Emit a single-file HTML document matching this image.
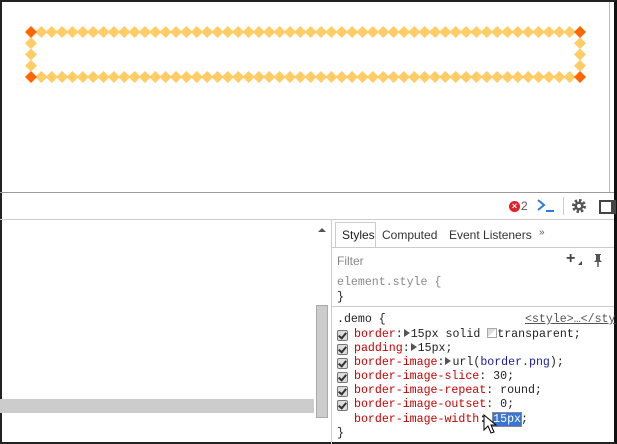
<!DOCTYPE html>
<html><head><style>
body{margin:0;width:617px;height:444px;overflow:hidden;background:#fff;position:relative;font-family:"Liberation Sans",sans-serif}
.a{position:absolute}
.m{font-family:"Liberation Mono",monospace;font-size:11.6px;color:#222;white-space:pre;line-height:14px}
.r{color:#c80000}.b{color:#1a1aa6}
.cb{position:absolute;left:337px;width:9px;height:9px;border:1px solid #777;border-radius:2px;background:#ddd}
.cb:after{content:"";position:absolute;left:2px;top:0px;width:3px;height:6px;border:solid #333;border-width:0 2px 2px 0;transform:rotate(40deg)}
.tri{display:inline-block;width:0;height:0;border-left:6px solid #555;border-top:4px solid transparent;border-bottom:4px solid transparent;margin:0 1px;vertical-align:0}
</style></head><body>
<div class="a" style="left:0;top:0;width:617px;height:444px;box-sizing:border-box;border:2px solid #222;border-right:3px solid #111"></div>
<div class="a" style="left:609px;top:2px;width:1px;height:190px;background:#bbb"></div>
<svg class="a" style="left:0;top:0" width="617" height="192">
<defs>
<pattern id="h" patternUnits="userSpaceOnUse" x="36.18" y="26" width="10.358" height="12"><path d="M5.18 0L11.18 6L5.18 12L-0.82 6Z" fill="#ffcc66"/></pattern>
<pattern id="v" patternUnits="userSpaceOnUse" x="25" y="37.25" width="12" height="11.25"><path d="M6 0L12 6L6 12L0 6Z" fill="#ffcc66"/></pattern>
<pattern id="v2" patternUnits="userSpaceOnUse" x="574" y="37.25" width="12" height="11.25"><path d="M6 0L12 6L6 12L0 6Z" fill="#ffcc66"/></pattern>
<pattern id="h2" patternUnits="userSpaceOnUse" x="36.18" y="71" width="10.358" height="12"><path d="M5.18 0L11.18 6L5.18 12L-0.82 6Z" fill="#ffcc66"/></pattern>
</defs>
<rect x="36" y="26" width="539" height="12" fill="url(#h)"/>
<rect x="36" y="71" width="539" height="12" fill="url(#h2)"/>
<rect x="25" y="37.5" width="12" height="33.5" fill="url(#v)"/>
<rect x="574" y="37.5" width="12" height="33.5" fill="url(#v2)"/>
<g fill="#ff6600">
<path d="M31 26L37 32L31 38L25 32Z"/><path d="M580 26L586 32L580 38L574 32Z"/>
<path d="M31 71L37 77L31 83L25 77Z"/><path d="M580 71L586 77L580 83L574 77Z"/>
</g>
</svg>
<div class="a" style="left:0;top:192px;width:614px;height:1px;background:#999"></div>
<div class="a" style="left:0;top:219px;width:614px;height:1px;background:#ccc"></div>
<div class="a" style="left:509px;top:201px;width:11px;height:11px;border-radius:50%;background:#e0202a;color:#fff;font-size:9px;line-height:11px;text-align:center;font-weight:bold">×</div>
<div class="a" style="left:521px;top:199px;font-size:12px;color:#555">2</div>
<svg class="a" style="left:536px;top:198px" width="20" height="16"><path d="M2 2L8 7L2 12" stroke="#2a7ae2" stroke-width="2" fill="none"/><path d="M10 13H18" stroke="#2a7ae2" stroke-width="2"/></svg>
<div class="a" style="left:563px;top:197px;width:1px;height:18px;background:#ccc"></div>
<svg class="a" style="left:571px;top:198px" width="16" height="16"><circle cx="8" cy="8" r="5" fill="none" stroke="#555" stroke-width="4" stroke-dasharray="2.2 1.7"/><circle cx="8" cy="8" r="4.5" fill="#555"/><circle cx="8" cy="8" r="2" fill="#fff"/></svg>
<div class="a" style="left:599px;top:200px;width:10px;height:10px;border:2px solid #444;border-right-width:5px"></div>
<div class="a" style="left:0;top:399px;width:314px;height:14px;background:#ccc"></div>
<div class="a" style="left:316px;top:305px;width:12px;height:113px;background:#ccc;border:1px solid #aaa;box-sizing:border-box"></div>
<div class="a" style="left:318px;top:228px;width:0;height:0;border-left:4px solid transparent;border-right:4px solid transparent;border-bottom:4px solid #555"></div>
<div class="a" style="left:331px;top:220px;width:1px;height:224px;background:#ccc"></div>
<div class="a" style="left:335px;top:222px;width:41px;height:25px;border:1px solid #ccc;border-bottom:none;box-sizing:border-box"></div>
<div class="a" style="left:332px;top:247px;width:282px;height:1px;background:#ccc"></div>
<div class="a" style="left:342px;top:228px;font-size:12px;color:#222">Styles</div>
<div class="a" style="left:382px;top:228px;font-size:12px;color:#333">Computed</div>
<div class="a" style="left:449px;top:228px;font-size:12px;color:#333">Event Listeners</div>
<div class="a" style="left:539px;top:227px;font-size:10px;color:#555">»</div>
<div class="a" style="left:337px;top:254px;font-size:12px;color:#888">Filter</div>
<div class="a" style="left:566px;top:250px;font-size:16px;color:#444;font-weight:bold">+</div>
<div class="a" style="left:578px;top:261px;width:0;height:0;border-left:4px solid transparent;border-bottom:4px solid #444"></div>
<svg class="a" style="left:592px;top:253px" width="12" height="14"><path d="M3 1H9V2H8V7L10 9H2L4 7V2H3Z" fill="#555"/><path d="M6 9V14" stroke="#555" stroke-width="1.5"/></svg>
<div class="a" style="left:332px;top:306px;width:282px;height:1px;background:#ccc"></div>
<div class="a m" style="left:337px;top:276px;color:#888">element.style {</div>
<div class="a m" style="left:337px;top:291px">}</div>
<div class="a m" style="left:337px;top:313px">.demo {</div>
<div class="a m" style="left:525px;top:313px;color:#555;text-decoration:underline">&lt;style&gt;…&lt;/sty</div>
<div class="cb" style="top:330px"></div><div class="a m" style="left:354px;top:328px"><span class="r">border</span>:<span class="tri"></span>15px solid <span style="display:inline-block;width:8px;height:8px;border:1px solid #aaa;background:linear-gradient(135deg,#ddd 50%,#fff 50%);vertical-align:-1px"></span>transparent;</div>
<div class="cb" style="top:344px"></div><div class="a m" style="left:354px;top:342px"><span class="r">padding</span>:<span class="tri"></span>15px;</div>
<div class="cb" style="top:358px"></div><div class="a m" style="left:354px;top:356px"><span class="r">border-image</span>:<span class="tri"></span>url(<span class="b">border.png</span>);</div>
<div class="cb" style="top:372px"></div><div class="a m" style="left:354px;top:370px"><span class="r">border-image-slice</span>: 30;</div>
<div class="cb" style="top:386px"></div><div class="a m" style="left:354px;top:384px"><span class="r">border-image-repeat</span>: round;</div>
<div class="cb" style="top:400px"></div><div class="a m" style="left:354px;top:398px"><span class="r">border-image-outset</span>: 0;</div>
<div class="a m" style="left:354px;top:413px"><span class="r">border-image-width</span>: <span style="background:#3875d7;color:#fff;outline:1px solid #888">15px</span>;</div>
<div class="a m" style="left:337px;top:427px">}</div>
<svg class="a" style="left:483px;top:414px" width="16" height="22"><path d="M1 1V16L5 12L8 19L11 18L8 11H13Z" fill="#fff" stroke="#000" stroke-width="1"/></svg>
</body></html>
